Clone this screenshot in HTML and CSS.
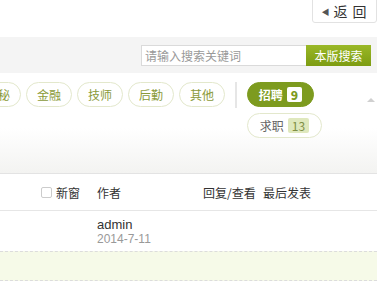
FILE: index.html
```html
<!DOCTYPE html>
<html lang="zh-CN">
<head>
  <meta charset="UTF-8">
  <title>招聘</title>
  <link rel="stylesheet" href="styles.css">
</head>
<body>
  <div class="wrap">
    <div class="topbar">
      <a class="back" href="#"><span class="arr">&#9664;</span>返 回</a>
    </div>

    <div class="searchbar">
      <input type="text" class="kw" placeholder="请输入搜索关键词">
      <button type="button" class="sbtn">本版搜索</button>
    </div>

    <div class="tags">
      <div class="cats">
        <a class="pill" href="#">文秘</a>
        <a class="pill" href="#">金融</a>
        <a class="pill" href="#">技师</a>
        <a class="pill" href="#">后勤</a>
        <a class="pill" href="#">其他</a>
      </div>
      <div class="sep"></div>
      <div class="types">
        <a class="pill on" href="#">招聘 <b class="num">9</b></a>
        <a class="pill type" href="#">求职 <b class="num">13</b></a>
      </div>
      <span class="fold"></span>
    </div>

    <div class="thead">
      <span class="newwin"><i class="chk"></i>新窗</span>
      <span class="c-author">作者</span>
      <span class="c-num">回复/查看</span>
      <span class="c-last">最后发表</span>
    </div>

    <div class="row">
      <div class="c-author">
        <div class="who">admin</div>
        <div class="when">2014-7-11</div>
      </div>
    </div>

    <div class="row hl"></div>
  </div>
</body>
</html>
```

FILE: styles.css
```css
body {
  margin: 0;
  font-family: "Noto Sans CJK SC", "DejaVu Sans", sans-serif;
  font-size: 12px;
  color: #333;
  background: #fff;
}
.wrap {
  width: 377px;
  overflow: hidden;
}
.topbar {
  height: 37px;
  display: flex;
  justify-content: flex-end;
}
.back {
  width: 65px;
  height: 27px;
  margin-top: -4px;
  border: 1px solid #e2e2e2;
  border-radius: 3px;
  display: flex;
  align-items: center;
  justify-content: center;
  padding-top: 3px;
  box-sizing: border-box;
  font-size: 14px;
  color: #333;
  text-decoration: none;
  letter-spacing: 1px;
}
.back .arr {
  font-size: 8px;
  color: #555;
  margin-right: 3px;
}
.searchbar {
  height: 36px;
  background: #f4f4f4;
  display: flex;
  justify-content: flex-end;
  align-items: center;
  padding-right: 6px;
}
.kw {
  width: 165px;
  height: 21px;
  box-sizing: border-box;
  border: 1px solid #dadada;
  border-right: none;
  padding: 0 3px;
  font-family: inherit;
  font-size: 12px;
  outline: none;
}
.kw::placeholder {
  color: #999;
}
.sbtn {
  width: 65px;
  height: 21px;
  border: none;
  background: linear-gradient(#9ab827, #7d9c12);
  color: #fff;
  font-family: inherit;
  font-size: 12px;
  padding: 0;
}
.tags {
  height: 101px;
  border-bottom: 1px solid #e3e3e3;
  background: linear-gradient(#fff 55%, #f3f3f1);
  display: flex;
  align-items: flex-start;
  padding-top: 9px;
  box-sizing: border-box;
  position: relative;
}
.cats {
  display: flex;
  gap: 5px;
  margin-left: -25px;
}
.pill {
  height: 25px;
  min-width: 46px;
  box-sizing: border-box;
  border: 1px solid #e3e8cc;
  border-radius: 13px;
  display: flex;
  align-items: center;
  justify-content: center;
  color: #8a9a3a;
  text-decoration: none;
  background: #fff;
  font-size: 12px;
}
.sep {
  width: 2px;
  height: 26px;
  background: #e6e6e6;
  margin: 0 10px 0 10px;
}
.types {
  display: flex;
  flex-direction: column;
  align-items: flex-start;
  gap: 6px;
}
.pill.on {
  width: 67px;
  background: #7d9b1f;
  border-color: #7d9b1f;
  color: #fff;
  font-weight: bold;
}
.pill.type {
  width: 75px;
  color: #666;
}
.num {
  margin-left: 4px;
  padding: 0 4px;
  line-height: 15px;
  border-radius: 2px;
  font-size: 12px;
}
.on .num {
  background: #fff;
  color: #7d9b1f;
}
.type .num {
  background: #dfe8bd;
  color: #7f8f45;
  font-weight: normal;
}
.fold {
  position: absolute;
  left: 367px;
  top: 21px;
  border: 4px solid transparent;
  border-bottom: 4px solid #d0d0d0;
}
.thead {
  height: 37px;
  border-bottom: 1px solid #e6e6e6;
  display: flex;
  align-items: center;
  padding-top: 1px;
  box-sizing: border-box;
}
.newwin {
  display: flex;
  align-items: center;
  margin-left: 41px;
  width: 56px;
}
.chk {
  width: 9px;
  height: 9px;
  border: 1px solid #ccc;
  border-radius: 2px;
  margin-right: 4px;
}
.c-author {
  width: 106px;
}
.c-num {
  width: 60px;
}
.row {
  height: 41px;
  border-bottom: 1px dashed #dcdcdc;
  box-sizing: border-box;
  padding: 7px 0 0 97px;
  line-height: 14px;
  font-family: "Liberation Sans", Arial, sans-serif;
}
.who {
  font-size: 13px;
  color: #333;
}
.when {
  color: #999;
}
.row.hl {
  height: 30px;
  background: #f6fae8;
  border-top: 1px dashed #dcdcdc;
  margin-top: -1px;
}
```
